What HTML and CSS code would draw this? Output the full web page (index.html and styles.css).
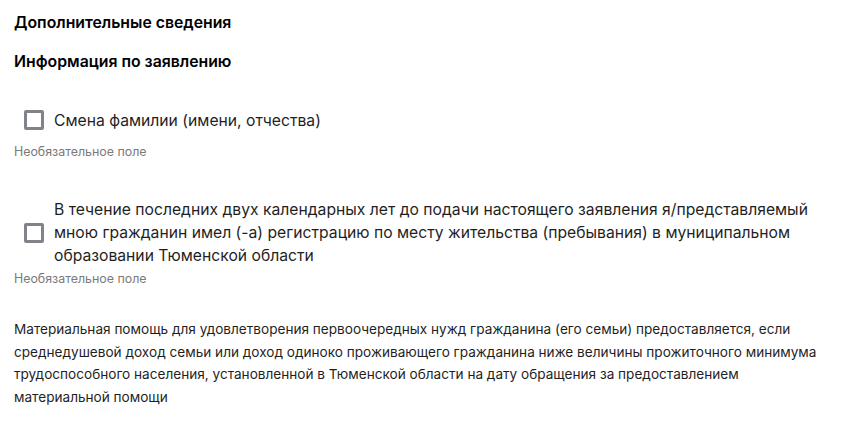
FILE: index.html
```html
<!DOCTYPE html>
<html lang="ru">
<head>
    <meta charset="UTF-8">
    <meta name="viewport" content="width=device-width, initial-scale=1.0">
    <title>Дополнительные сведения</title>
    <link rel="stylesheet" href="styles.css">
</head>
<body>
    <div class="form-section">
        <h2 class="section-title">Дополнительные сведения</h2>
        <h3 class="section-subtitle">Информация по заявлению</h3>

        <div class="field">
            <label class="checkbox-row">
                <span class="checkbox-box"></span>
                <span class="checkbox-label">Смена фамилии (имени, отчества)</span>
            </label>
            <div class="field-hint">Необязательное поле</div>
        </div>

        <div class="field field-long">
            <label class="checkbox-row">
                <span class="checkbox-box"></span>
                <span class="checkbox-label">В течение последних двух календарных лет до подачи настоящего заявления я/представляемый<br>мною гражданин имел (-а) регистрацию по месту жительства (пребывания) в муниципальном<br>образовании Тюменской области</span>
            </label>
            <div class="field-hint">Необязательное поле</div>
        </div>

        <p class="info-text">Материальная помощь для удовлетворения первоочередных нужд гражданина (его семьи) предоставляется, если<br>среднедушевой доход семьи или доход одиноко проживающего гражданина ниже величины прожиточного минимума<br>трудоспособного населения, установленной в Тюменской области на дату обращения за предоставлением<br>материальной помощи</p>
    </div>
</body>
</html>
```

FILE: styles.css
```css
:root {
    --text-primary: #1f1f1f;
    --text-secondary: #7a7a7a;
    --checkbox-border: #80838a;
}

* {
    margin: 0;
    padding: 0;
    box-sizing: border-box;
}

body {
    font-family: Inter, "Noto Sans", Roboto, sans-serif;
    color: var(--text-primary);
    background-color: #ffffff;
}

.form-section {
    padding: 13px 14px 0;
    width: 841px;
}

.section-title {
    font-size: 15.8px;
    font-weight: 600;
    line-height: 20px;
    color: #000000;
    margin-bottom: 19px;
}

.section-subtitle {
    font-size: 15.8px;
    font-weight: 600;
    line-height: 20px;
    color: #000000;
    margin-bottom: 28px;
}

.field {
    margin-bottom: 38px;
}

.field-long {
    margin-bottom: 31px;
}

.checkbox-row {
    display: flex;
    align-items: center;
    min-height: 40px;
    padding-left: 10px;
    gap: 10px;
    cursor: pointer;
}

.checkbox-box {
    flex: none;
    width: 20px;
    height: 20px;
    border: 3px solid var(--checkbox-border);
    border-radius: 2px;
}

.checkbox-label {
    font-size: 15.7px;
    line-height: 23px;
    white-space: nowrap;
}

.field-hint {
    margin-top: 4px;
    font-size: 12.4px;
    line-height: 16px;
    color: var(--text-secondary);
}

.info-text {
    font-size: 13.6px;
    line-height: 22.5px;
    white-space: nowrap;
}
```
